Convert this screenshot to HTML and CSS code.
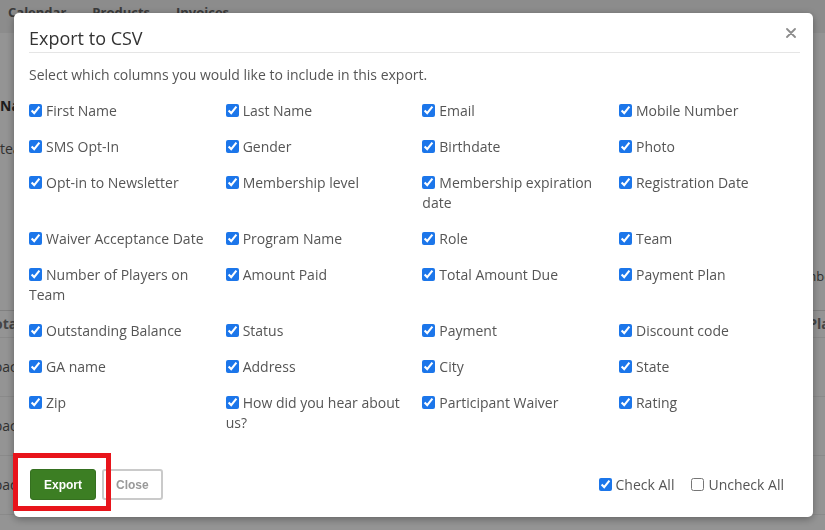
FILE: index.html
```html
<!DOCTYPE html>
<html lang="en">
<head>
    <meta charset="utf-8">
    <title>Export to CSV</title>
    <link rel="stylesheet" href="styles.css">
</head>
<body>
    <div class="page">
        <nav class="topnav">
            <span>Calendar</span>
            <span>Products</span>
            <span>Invoices</span>
        </nav>
        <div class="page-body">
            <h2 class="page-title">Name</h2>
            <p class="page-sub">team</p>
            <div class="page-tools">Members</div>
            <div class="page-table">
                <div class="table-head"><span>Total</span><span>Plan</span></div>
                <div class="table-row"><span>Spaces</span></div>
                <div class="table-row"><span>Spaces</span></div>
                <div class="table-row"><span>Spaces</span></div>
            </div>
        </div>
    </div>

    <div class="backdrop">
        <div class="modal">
            <div class="modal-header">
                <h4 class="modal-title">Export to CSV</h4>
                <button class="close" type="button" aria-label="Close">
                    <svg width="10" height="10" viewBox="0 0 10 10">
                        <path d="M1 1 L9 9 M9 1 L1 9" stroke="#8c8c8c" stroke-width="1.8" stroke-linecap="round"/>
                    </svg>
                </button>
            </div>

            <div class="modal-body">
                <p class="intro">Select which columns you would like to include in this export.</p>
                <div class="columns">
                    <label><input type="checkbox" checked>First Name</label>
                    <label><input type="checkbox" checked>Last Name</label>
                    <label><input type="checkbox" checked>Email</label>
                    <label><input type="checkbox" checked>Mobile Number</label>

                    <label><input type="checkbox" checked>SMS Opt-In</label>
                    <label><input type="checkbox" checked>Gender</label>
                    <label><input type="checkbox" checked>Birthdate</label>
                    <label><input type="checkbox" checked>Photo</label>

                    <label><input type="checkbox" checked>Opt-in to Newsletter</label>
                    <label><input type="checkbox" checked>Membership level</label>
                    <label><input type="checkbox" checked>Membership expiration date</label>
                    <label><input type="checkbox" checked>Registration Date</label>

                    <label><input type="checkbox" checked>Waiver Acceptance Date</label>
                    <label><input type="checkbox" checked>Program Name</label>
                    <label><input type="checkbox" checked>Role</label>
                    <label><input type="checkbox" checked>Team</label>

                    <label><input type="checkbox" checked>Number of Players on Team</label>
                    <label><input type="checkbox" checked>Amount Paid</label>
                    <label><input type="checkbox" checked>Total Amount Due</label>
                    <label><input type="checkbox" checked>Payment Plan</label>

                    <label><input type="checkbox" checked>Outstanding Balance</label>
                    <label><input type="checkbox" checked>Status</label>
                    <label><input type="checkbox" checked>Payment</label>
                    <label><input type="checkbox" checked>Discount code</label>

                    <label><input type="checkbox" checked>GA name</label>
                    <label><input type="checkbox" checked>Address</label>
                    <label><input type="checkbox" checked>City</label>
                    <label><input type="checkbox" checked>State</label>

                    <label><input type="checkbox" checked>Zip</label>
                    <label><input type="checkbox" checked>How did you hear about us?</label>
                    <label><input type="checkbox" checked>Participant Waiver</label>
                    <label><input type="checkbox" checked>Rating</label>
                </div>
            </div>

            <div class="modal-footer">
                <button class="btn btn-export" type="button">Export</button>
                <button class="btn btn-close" type="button">Close</button>
                <div class="footer-checks">
                    <label><input type="checkbox" checked>Check All</label>
                    <label><input type="checkbox">Uncheck All</label>
                </div>
            </div>

            <div class="highlight"></div>
        </div>
    </div>
</body>
</html>
```

FILE: styles.css
```css
html, body {
    margin: 0;
    padding: 0;
    overflow: hidden;
    width: 100%;
    height: 100%;
}
body {
    font-family: "Open Sans", "Liberation Sans", sans-serif;
    font-size: 14px;
    line-height: 20px;
    color: #555;
    background: #fff;
}

/* page behind the dialog */
.topnav {
    height: 33px;
    background: #f2f2f2;
    display: flex;
    gap: 26px;
    padding-left: 8px;
    font-weight: 700;
    font-size: 13px;
    line-height: 24px;
    color: #666;
}
.page-body {
    padding-top: 63px;
}
.page-title {
    margin: 0;
    font-size: 14px;
    line-height: 20px;
    font-weight: 700;
    color: #333;
}
.page-sub {
    margin: 23px 0 0;
    color: #555;
}
.page-tools {
    margin-top: 107px;
    text-align: right;
    margin-right: -18px;
    font-size: 13px;
    color: #555;
}
.page-table {
    margin-top: 24px;
}
.table-head {
    display: flex;
    justify-content: space-between;
    height: 26px;
    line-height: 26px;
    border-top: 1px solid #ddd;
    border-bottom: 1px solid #eee;
    font-weight: 700;
    color: #777;
    margin-left: -14px;
    margin-right: -14px;
}
.table-row {
    height: 58px;
    line-height: 58px;
    border-bottom: 1px solid #eee;
    margin-left: -14px;
    color: #555;
}

/* dialog */
.backdrop {
    position: fixed;
    top: 0;
    left: 0;
    right: 0;
    bottom: 0;
    background: rgba(0, 0, 0, 0.42);
    padding: 13px 0 0 14px;
}
.modal {
    position: relative;
    width: 799px;
    height: 504px;
    box-sizing: border-box;
    background: #fff;
    border-radius: 5px;
    box-shadow: 0 2px 8px rgba(0, 0, 0, 0.35);
}
.modal-header {
    display: flex;
    justify-content: space-between;
    margin: 0 13px 0 15px;
    padding: 15px 0 4px;
    border-bottom: 1px solid #e5e5e5;
}
.modal-title {
    margin: 0;
    font-size: 18px;
    font-weight: 400;
    line-height: 20px;
    color: #333;
}
.close {
    border: none;
    background: none;
    padding: 0;
    margin: 0 4px 0 0;
    width: 10px;
    height: 10px;
    align-self: flex-start;
    line-height: 0;
}
.modal-body {
    padding: 12px 15px 22px;
}
.intro {
    margin: 0 0 16px;
}
.columns {
    display: grid;
    grid-template-columns: repeat(3, 196.67px) 1fr;
    row-gap: 16px;
}
.columns label {
    display: block;
    padding-right: 10px;
}
input[type="checkbox"] {
    width: 13px;
    height: 13px;
    margin: 0 4px 0 0;
    vertical-align: -1px;
    accent-color: #1c76ea;
}
.modal-footer {
    display: flex;
    align-items: center;
    gap: 6px;
    padding: 14px 29px 0 16px;
}
.btn {
    height: 31px;
    box-sizing: border-box;
    border-radius: 3px;
    font-family: "Liberation Sans", Arial, sans-serif;
    font-size: 12px;
    font-weight: 700;
    padding: 0 13px;
}
.btn-export {
    background: #3c7e23;
    border: 1px solid #357020;
    color: #fff;
}
.btn-close {
    background: #fff;
    border: 2px solid #cacaca;
    color: #999;
    padding: 0 12px;
}
.footer-checks {
    margin-left: auto;
    display: flex;
    gap: 17px;
}
.highlight {
    position: absolute;
    left: -1px;
    top: 440px;
    width: 98px;
    height: 58px;
    box-sizing: border-box;
    border: 5px solid #e8141b;
}
```
